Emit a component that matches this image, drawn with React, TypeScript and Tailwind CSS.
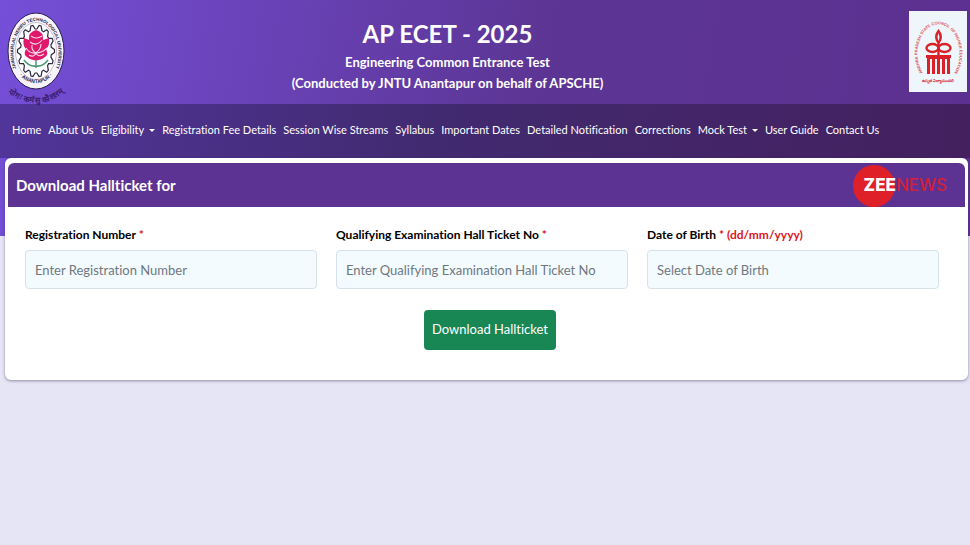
import { useId } from 'react';

const navLinks = [
  { label: 'Home' },
  { label: 'About Us' },
  { label: 'Eligibility', menu: true },
  { label: 'Registration Fee Details' },
  { label: 'Session Wise Streams' },
  { label: 'Syllabus' },
  { label: 'Important Dates' },
  { label: 'Detailed Notification' },
  { label: 'Corrections' },
  { label: 'Mock Test', menu: true },
  { label: 'User Guide' },
  { label: 'Contact Us' },
];

const fields = [
  { label: 'Registration Number', hint: '', placeholder: 'Enter Registration Number' },
  {
    label: 'Qualifying Examination Hall Ticket No',
    hint: '',
    placeholder: 'Enter Qualifying Examination Hall Ticket No',
  },
  { label: 'Date of Birth', hint: '(dd/mm/yyyy)', placeholder: 'Select Date of Birth' },
];

// Outline of the 14-tooth gear around the rose
const gearPoints = Array.from({ length: 56 }, (_, i) => {
  const a = ((i - 0.5) * Math.PI * 2) / 56;
  const outer = i % 4 < 2;
  const x = 30 + (outer ? 18.5 : 15.5) * Math.cos(a);
  const y = 40 + (outer ? 26 : 22) * Math.sin(a);
  return `${x.toFixed(1)},${y.toFixed(1)}`;
}).join(' ');

function UniversityLogo() {
  return (
    <svg viewBox="0 0 60 92" className="h-[92px] w-[60px] shrink-0 overflow-visible" role="img" aria-label="JNTU Anantapur">
      <defs>
        <path id="ring-top" d="M12 61 A22.500 32 0 1 1 48 61" />
        <path id="ring-bottom" d="M11 61 A26 35 0 0 0 49 61" />
        <path id="motto" d="M0 76 Q30 102 60 76" />
      </defs>
      <ellipse cx="30" cy="40" rx="28" ry="38" fill="#f7f3fb" stroke="#2c2050" strokeWidth="1" />
      <ellipse cx="30" cy="40" rx="20.5" ry="28.5" fill="#fff" stroke="#8a84a0" strokeWidth="0.5" />
      <polygon points={gearPoints} fill="#fff" stroke="#2c2842" strokeWidth="1.2" />
      <g fontFamily="Liberation Sans" fontWeight="bold" fill="#241a3c">
        <text fontSize="4.5">
          <textPath href="#ring-top" startOffset="50%" textAnchor="middle">
            JAWAHARLAL NEHRU TECHNOLOGICAL UNIVERSITY
          </textPath>
        </text>
        <text fontSize="5">
          <textPath href="#ring-bottom" startOffset="50%" textAnchor="middle">
            · ANANTAPUR ·
          </textPath>
        </text>
        <text fontSize="8" dy="3" fill="#3a1c6e">
          <textPath href="#motto" startOffset="50%" textAnchor="middle">
            योगः कर्मसु कौशलम्
          </textPath>
        </text>
      </g>
      <path d="M30 46 V57 M30 55 Q23 56 18 49 M30 55 Q37 56 42 49" fill="none" stroke="#4f9a77" strokeWidth="1.5" />
      <path
        d="M30 19 Q38 21 37 29 L43 27 Q44 35 40 38 Q43 44 39 46 Q35 50 30 49 Q25 50 21 46 Q17 44 20 38 Q16 34 18 27 L23 29 Q22 21 30 19Z"
        fill="#e0186c"
      />
      <path
        d="M25 25 Q30 29 36 25 M24 31 Q31 36 36 29 M20 37 Q24 43 30 42 Q36 42 41 37 M26 34 Q25 39 30 42 Q35 38 35 33 M23 44 Q28 47 30 42 Q32 47 38 43"
        fill="none"
        stroke="#fbd9e8"
        strokeWidth="1.1"
      />
    </svg>
  );
}

function CouncilLogo() {
  return (
    <svg viewBox="0 0 58 81" className="h-[81px] w-[58px] shrink-0" role="img" aria-label="APSCHE">
      <defs>
        <path id="council" d="M14 62 A21 29 0 1 1 45 62" />
      </defs>
      <rect width="58" height="81" fill="#eef6fb" />
      <text fontFamily="Liberation Sans" fontWeight="bold" fontSize="4" fill="#dc5058">
        <textPath href="#council" startOffset="50%" textAnchor="middle">
          ANDHRA PRADESH STATE COUNCIL OF HIGHER EDUCATION
        </textPath>
      </text>
      <g fill="none" stroke="#da2128" strokeWidth="2.4">
        <path d="M29.500 44 V32 Q25 26 29.500 20 Q34 26 29.500 32" />
        <ellipse cx="23.500" cy="37" rx="6" ry="4" />
        <ellipse cx="35.500" cy="37" rx="6" ry="4" />
      </g>
      <path
        d="M17 44 H42 V47 H41 V63 H38 V48 H36 V63 H33 V48 H31 V63 H28 V48 H26 V63 H23 V48 H21 V63 H18 V47 H17Z"
        fill="#da2128"
      />
      <text x="29" y="71" textAnchor="middle" fontFamily="Noto Sans" fontWeight="bold" fontSize="4" fill="#d8323a">
        ఉన్నత విద్యామండలి
      </text>
    </svg>
  );
}

function Field({ label, hint, placeholder }: { label: string; hint: string; placeholder: string }) {
  const id = useId();
  return (
    <div>
      <label htmlFor={id} className="block text-xs leading-5 font-bold text-black">
        {label} <span className="text-[#dc1420]">* {hint}</span>
      </label>
      <input
        id={id}
        type="text"
        placeholder={placeholder}
        className="mt-[5px] block h-[39px] w-full rounded border border-[#d5e2ea] bg-[#f4fbff] px-[9px] text-[13px] text-gray-800 placeholder:text-[#6f787f]"
      />
    </div>
  );
}

export default function App() {
  return (
    <div className="min-h-screen bg-[#e5e5f5] bg-[linear-gradient(100deg,#754fd8_0%,#5c3594_55%,#5c3090_100%)] bg-[length:100%_236px] bg-no-repeat font-['Lato','Open_Sans',sans-serif] [font-variant-ligatures:no-common-ligatures]">
      <header className="flex h-[104px] items-start pt-[11px] pr-[3px] pl-[6px]">
        <UniversityLogo />
        <div className="flex-1 pt-[5px] pr-20 text-center font-bold text-white">
          <h1 className="text-2xl leading-9">AP ECET - 2025</h1>
          <p className="text-[13px] leading-[21px]">
            Engineering Common Entrance Test
            <br />
            (Conducted by JNTU Anantapur on behalf of APSCHE)
          </p>
        </div>
        <CouncilLogo />
      </header>

      <nav className="flex h-[54px] items-center gap-[7px] bg-[linear-gradient(100deg,#52359a_0%,#422a70_45%,#44205f_100%)] px-3 pb-[2px] text-[11px] whitespace-nowrap text-white">
        {navLinks.map((link) => (
          <a key={link.label} href="#" className="flex items-center gap-[5px]">
            {link.label}
            {link.menu && (
              <span className="border-x-[3px] border-t-[3px] border-x-transparent border-t-white" />
            )}
          </a>
        ))}
      </nav>

      <main className="mr-[2px] ml-[5px] rounded-md border-[3px] border-t-[5px] border-white bg-white shadow-[0_1px_3px_rgba(60,50,90,0.5)]">
        <div className="relative flex h-11 items-center rounded-t-md bg-[#5c3292] px-2">
          <h2 className="text-[15px] leading-6 font-bold text-white">Download Hallticket for</h2>
          <div className="absolute top-[2px] right-[18px] flex h-[42px] items-center pl-[11px] font-['Inter'] text-[17px] font-medium">
            <span className="absolute left-0 size-[42px] rounded-full bg-[#df2028]" />
            <span className="relative font-extrabold text-white">ZEE</span>
            <span className="relative text-[#d0203c]">NEWS</span>
          </div>
        </div>

        <form className="pt-[18px] pr-[26px] pb-[27px] pl-[17px]">
          <div className="grid grid-cols-3 gap-[19px]">
            {fields.map((field) => (
              <Field key={field.label} {...field} />
            ))}
          </div>
          <div className="mt-[21px] pl-4 text-center">
            <button type="button" className="h-10 rounded bg-[#198754] px-2 text-[13px] text-white">
              Download Hallticket
            </button>
          </div>
        </form>
      </main>
    </div>
  );
}
